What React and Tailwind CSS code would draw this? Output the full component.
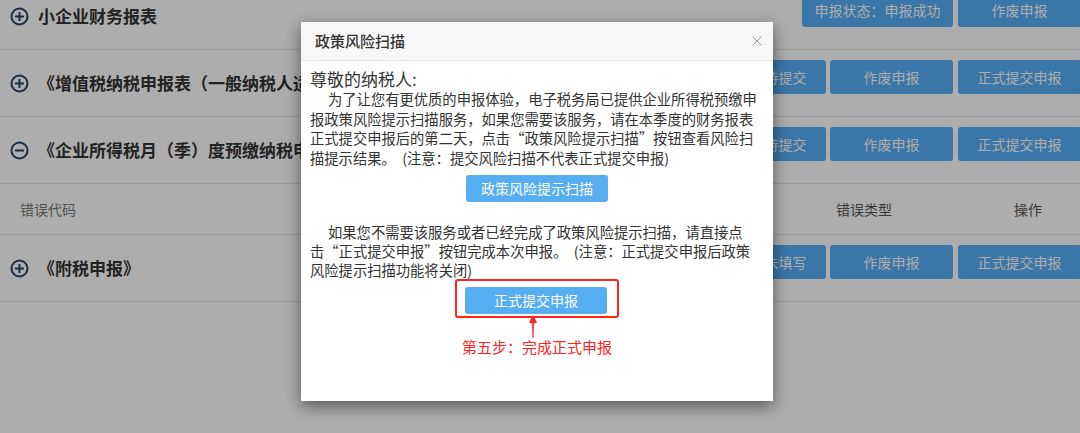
import React from "react";
import { X } from "lucide-react";

const FONT = { fontFamily: '"Microsoft YaHei", "Noto Sans CJK SC", "Noto Sans", sans-serif' };

const ToggleIcon = ({ open }) => (
  <svg width="19" height="19" viewBox="0 0 19 19" className="shrink-0">
    <circle cx="9.5" cy="9.5" r="8" fill="none" stroke="#293e64" strokeWidth="2" />
    <line x1="5" y1="9.5" x2="14" y2="9.5" stroke="#293e64" strokeWidth="2" />
    {!open && <line x1="9.5" y1="5" x2="9.5" y2="14" stroke="#293e64" strokeWidth="2" />}
  </svg>
);

const RowButton = ({ children, wide, className = "" }) => (
  <button
    className={`flex h-[34px] items-center justify-center rounded-[3px] bg-[#56aef6] text-[14px] text-white ${
      wide ? "w-[151px]" : "w-[123px]"
    } ${className}`}
  >
    {children}
  </button>
);

const Row = ({ title, open, status }) => (
  <div className="flex h-[67px] items-center justify-between border-b border-[#e4e4e4]">
    <div className="flex max-w-[301px] items-center gap-[9px] overflow-hidden whitespace-nowrap pl-[10px]">
      <ToggleIcon open={open} />
      <span className="text-[17px] font-bold text-[#333]">{title}</span>
    </div>
    <div className="mr-[-1px] flex self-start pt-[10px]">
      <RowButton wide>{status}</RowButton>
      {status !== "申报状态：申报成功" ? (
        <>
          <RowButton className="ml-[4px]">作废申报</RowButton>
          <RowButton className="ml-[5px]">正式提交申报</RowButton>
        </>
      ) : (
        <RowButton className="ml-[5px]">作废申报</RowButton>
      )}
    </div>
  </div>
);

const Page = () => (
  <div className="-mt-[17px] bg-white">
    <Row title="小企业财务报表" status="申报状态：申报成功" />
    <Row title="《增值税纳税申报表（一般纳税人适用）》" status="申报状态：待提交" />
    <Row title="《企业所得税月（季）度预缴纳税申报表（A类）》" open status="申报状态：待提交" />
    <div className="flex h-[51px] items-center border-b border-[#e4e4e4] text-[14px]">
      <div className="flex-1 pl-[20px] text-[#7a7a7a]">错误代码</div>
      <div className="w-[120px] text-center text-[#555]">错误类型</div>
      <div className="w-[52px]" />
      <div className="w-[104px] text-center text-[#555]">操作</div>
    </div>
    <Row title="《附税申报》" status="申报状态：未填写" />
  </div>
);

const Modal = () => (
  <div className="absolute left-[301px] top-[22px] flex h-[379px] w-[472px] flex-col bg-white shadow-[0_5px_15px_rgba(0,0,0,0.5)]">
    <div className="flex h-[39px] shrink-0 items-center justify-between border-b border-[#e5e5e5] bg-[#f7f7f7] pl-[14px] pr-[8px]">
      <span className="text-[15px] font-medium text-[#333]">政策风险扫描</span>
      <X size={16} strokeWidth={1.5} color="#9a9a9a" />
    </div>
    <div className="px-[9px] text-[#333]">
      <div className="pt-[8px] text-[17px] leading-[20px]">尊敬的纳税人:</div>
      <div className="whitespace-nowrap text-[14.3px] leading-[19.6px]">
        <div className="pl-[18px]">为了让您有更优质的申报体验，电子税务局已提供企业所得税预缴申</div>
        <div>报政策风险提示扫描服务，如果您需要该服务，请在本季度的财务报表</div>
        <div>正式提交申报后的第二天，点击“政策风险提示扫描”按钮查看风险扫</div>
        <div>描提示结果。{"\u00a0\u00a0"}(注意：提交风险扫描不代表正式提交申报)</div>
      </div>
      <button className="mx-auto mt-[7.5px] flex h-[27px] w-[142px] items-center justify-center rounded-[3px] bg-[#56adf0] text-[14px] text-white">
        政策风险提示扫描
      </button>
      <div className="mt-[20px] whitespace-nowrap text-[14.3px] leading-[19px]">
        <div className="pl-[18px]">如果您不需要该服务或者已经完成了政策风险提示扫描，请直接点</div>
        <div>击“正式提交申报”按钮完成本次申报。{"\u00a0\u00a0"}(注意：正式提交申报后政策</div>
        <div>风险提示扫描功能将关闭)</div>
      </div>
      <div className="mx-auto flex w-[164px] flex-col items-center">
        <div className="h-[39px] w-[164px] rounded-[3px] border-2 border-[#ff2424] pl-[8px] pt-[6px]">
          <button className="flex h-[27px] w-[142px] items-center justify-center rounded-[3px] bg-[#56adf0] text-[14px] text-white">
            正式提交申报
          </button>
        </div>
        <svg width="164" height="24" viewBox="0 0 164 24" className="-mt-[4px]">
          <path d="M78 1 L82 8.5 L78.9 9.6 L78.6 24 L77.4 24 L77.1 9.6 L74 8.5 Z" fill="#ff2424" />
        </svg>
        <div className="-mt-[1px] whitespace-nowrap text-[15px] leading-[20px] text-[#ff2424]">
          第五步：完成正式申报
        </div>
      </div>
    </div>
  </div>
);

export default function App() {
  return (
    <div className="relative h-[433px] w-[1080px] overflow-hidden bg-white" style={FONT}>
      <Page />
      <div className="absolute inset-0 bg-black/[0.32]" />
      <Modal />
    </div>
  );
}
